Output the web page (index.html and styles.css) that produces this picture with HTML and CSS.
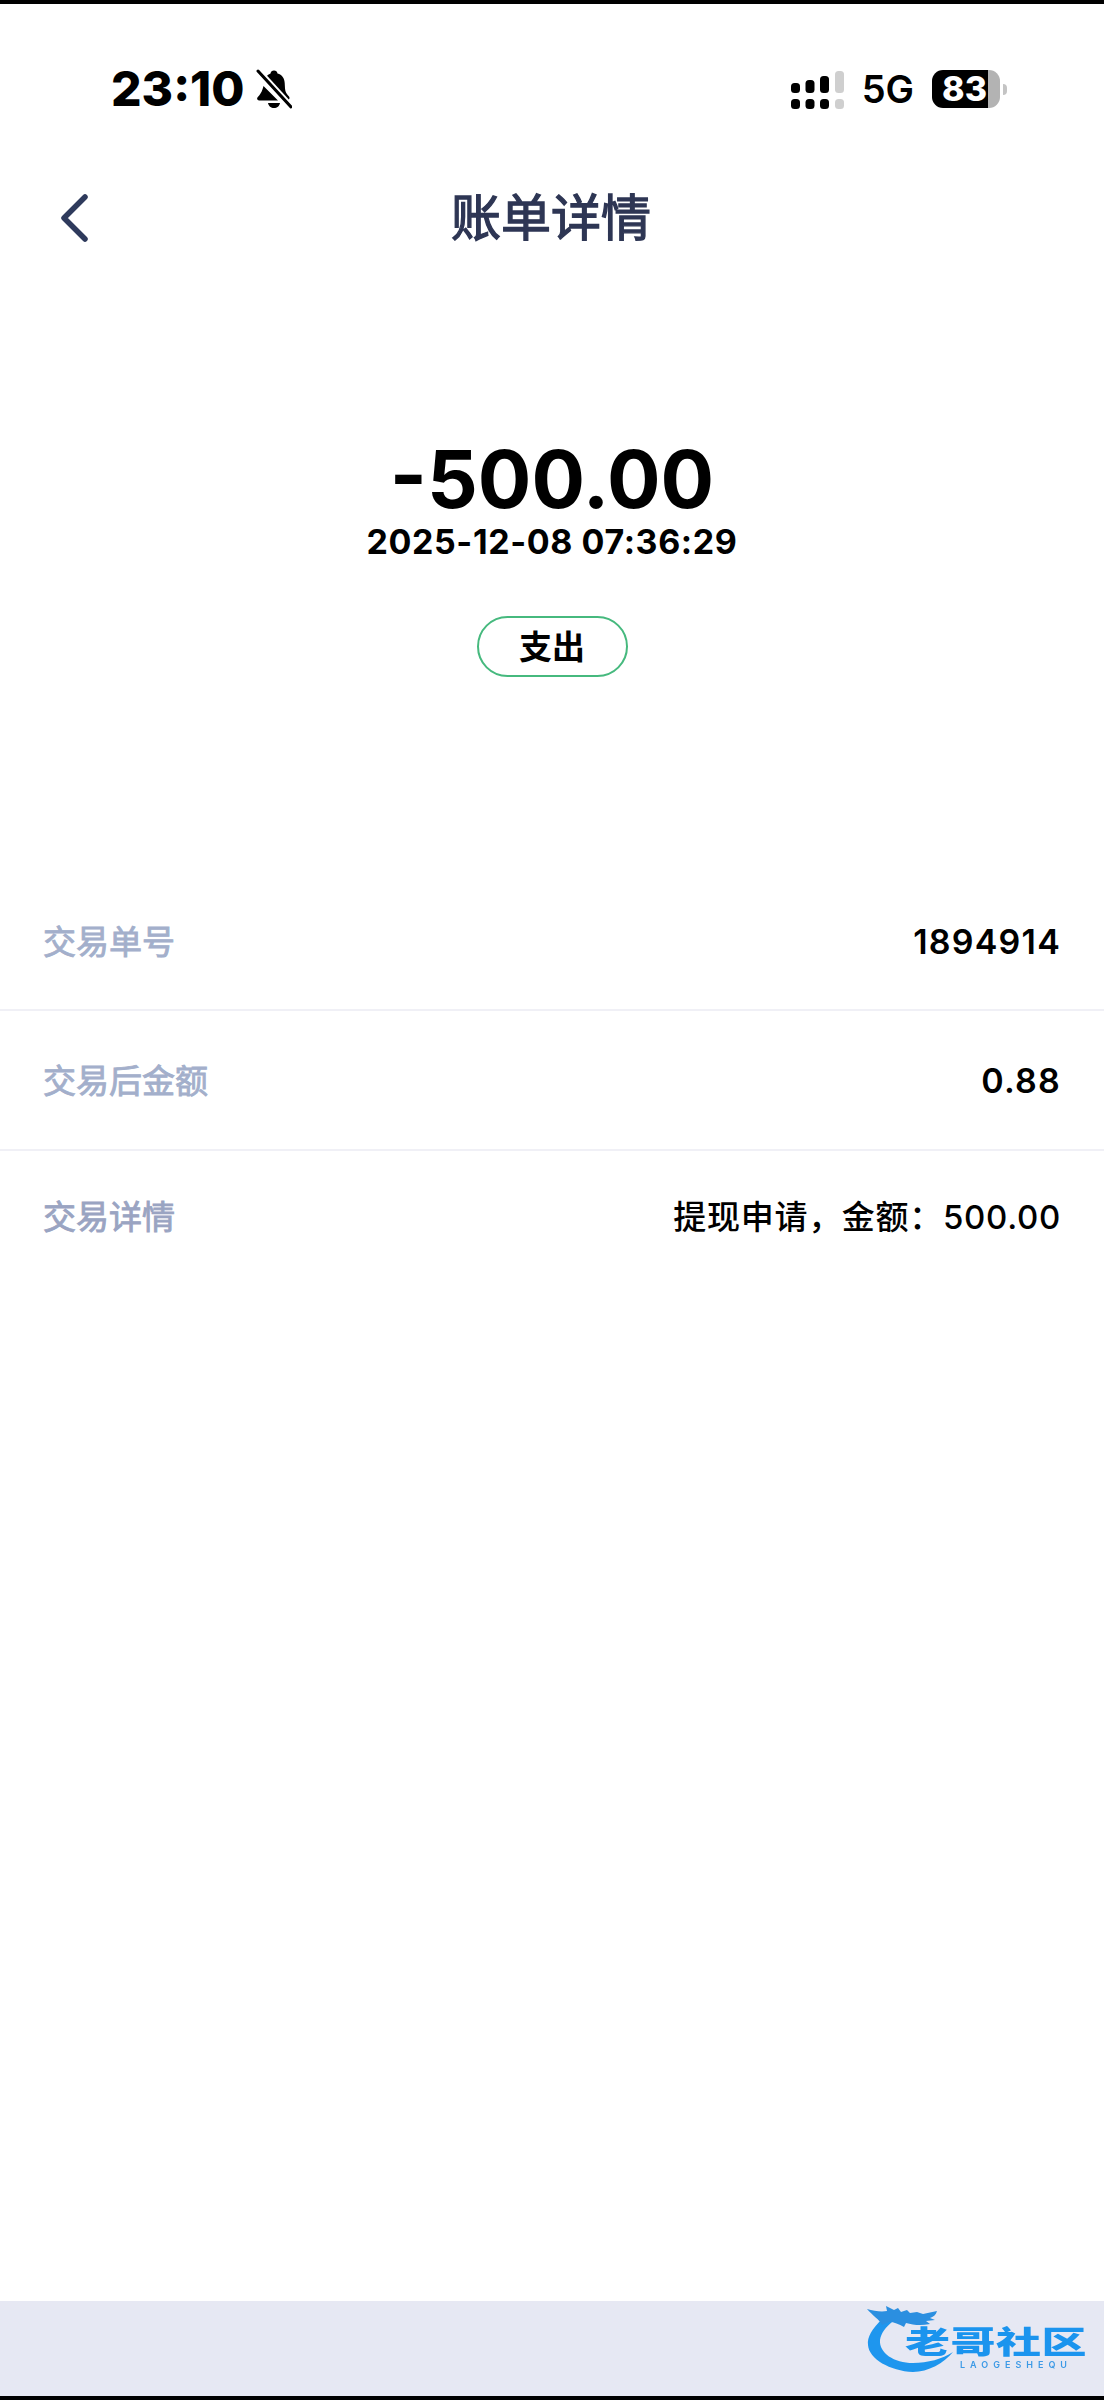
FILE: index.html
```html
<!DOCTYPE html>
<html lang="zh-CN">
<head>
<meta charset="utf-8">
<title>账单详情</title>
<link rel="stylesheet" href="styles.css">
</head>
<body>
<div class="page">
  <header class="status">
    <div class="status-left">
      <span class="time">23:10</span>
      <svg class="bell" viewBox="0 0 36 40" aria-hidden="true">
        <path d="M18 1.500c2 0 3.200 1.300 3.500 3 4.600 1.200 7 5 7.200 9.500l.3 5.500c.2 3.500 1.800 5.600 4 8 1 1.200.6 3-1 3.500H26L8 12.500C9 8.500 11 5.700 14.500 4.500 14.800 2.800 16 1.500 18 1.500Z"/>
        <path d="M7.500 17 22 31.500H3c-1.800 0-2.500-2-1.400-3.200 2.600-2.700 4.500-5.500 5.900-11.300Z"/>
        <path d="M12 34h12c-.5 3-3 5-6 5s-5.500-2-6-5Z"/>
        <path class="bell-gap" d="M2 2l33 36"/>
        <path class="bell-slash" d="M2 2l33 36"/>
      </svg>
    </div>
    <div class="status-right">
      <svg class="signal" viewBox="0 0 53 38" aria-hidden="true">
        <rect x="0" y="12" width="9" height="10" rx="3.500"/>
        <rect x="0" y="28" width="9" height="10" rx="3.500"/>
        <rect x="14.500" y="9" width="9" height="13" rx="3.500"/>
        <rect x="14.500" y="28" width="9" height="10" rx="3.500"/>
        <rect x="29" y="5" width="9" height="17" rx="3.500"/>
        <rect x="29" y="28" width="9" height="10" rx="3.500"/>
        <rect class="signal-off" x="44" y="0" width="9" height="22" rx="3.500"/>
        <rect class="signal-off" x="44" y="28" width="9" height="10" rx="3.500"/>
      </svg>
      <span class="network">5G</span>
      <div class="battery">
        <span class="battery-level">83</span>
        <span class="battery-rest"></span>
        <span class="battery-nub"></span>
      </div>
    </div>
  </header>

  <nav class="nav">
    <svg class="back" viewBox="0 0 28 48" aria-hidden="true">
      <path d="M25 3 4 24l21 21"/>
    </svg>
    <h1 class="title">账单详情</h1>
  </nav>

  <section class="hero">
    <div class="amount">-500.00</div>
    <div class="date">2025-12-08 07:36:29</div>
    <div class="chip">支出</div>
  </section>

  <section class="details">
    <div class="row row-bordered">
      <span class="label">交易单号</span>
      <span class="value">1894914</span>
    </div>
    <div class="row row-bordered">
      <span class="label">交易后金额</span>
      <span class="value">0.88</span>
    </div>
    <div class="row row-last">
      <span class="label label-dim">交易详情</span>
      <span class="value value-text">提现申请，金额：500.00</span>
    </div>
  </section>

  <footer class="band">
    <div class="logo">
      <svg class="dragon" viewBox="0 0 90 72" aria-hidden="true">
        <path class="dragon-body" d="M16 16C6 26 1 34 2 42c1 14 22 26 45 27 15 0 31-9 40-20-11 7-25 11-40 11C28 60 13 50 14 37c1-7 6-13 12-18Z"/>
        <path class="dragon-head" d="M1 6c7 2 14 3 20 2l-1-5 8 4 4-2 3 4 6-2 3 3 7-1 6 2 14-3c-1 4-4 6-7 7l5 2-9 1 4 3c-9 2-17 1-24-1l-2 4c-5-3-10-5-15-5l-7 3C14 17 6 12 1 6Z"/>
      </svg>
      <div class="logo-text">
        <span class="logo-cn">老哥社区</span>
        <span class="logo-en">LAOGESHEQU</span>
      </div>
    </div>
  </footer>
</div>
</body>
</html>
```

FILE: styles.css
```css
* {
  box-sizing: border-box;
}

html,
body {
  margin: 0;
  padding: 0;
  background: #fff;
}

body {
  font-family: Inter, "Noto Sans CJK SC", "Liberation Sans", sans-serif;
  color: #000;
}

.page {
  display: flex;
  flex-direction: column;
  width: 1104px;
  height: 2400px;
  border-top: 4px solid #000;
  border-bottom: 4px solid #000;
  background: #fff;
}

/* status bar */
.status {
  display: flex;
  justify-content: space-between;
  align-items: center;
  height: 170px;
  padding: 0 97px 0 111px;
  flex: none;
}

.status-left {
  display: flex;
  align-items: center;
  gap: 12px;
}

.time {
  font-size: 48px;
  font-weight: 800;
  line-height: 56px;
}

.bell {
  width: 36px;
  height: 40px;
  fill: #000;
}

.bell-gap {
  fill: none;
  stroke: #fff;
  stroke-width: 7;
}

.bell-slash {
  fill: none;
  stroke: #000;
  stroke-width: 3;
  stroke-linecap: round;
}

.status-right {
  display: flex;
  align-items: center;
}

.signal {
  width: 53px;
  height: 38px;
  margin-top: 1px;
  fill: #000;
}

.signal-off {
  fill: #cfcfcf;
}

.network {
  margin-left: 18px;
  font-size: 38px;
  font-weight: 600;
  line-height: 44px;
}

.battery {
  display: flex;
  align-items: center;
  margin-left: 18px;
}

.battery-level {
  display: flex;
  justify-content: flex-end;
  align-items: center;
  width: 56px;
  height: 38px;
  padding-right: 1px;
  border-radius: 11px 0 0 11px;
  background: #000;
  color: #fff;
  font-size: 34px;
  font-weight: 800;
  line-height: 38px;
}

.battery-rest {
  width: 12px;
  height: 38px;
  border-radius: 0 11px 11px 0;
  background: #b3b3b3;
}

.battery-nub {
  width: 4px;
  height: 11px;
  margin-left: 3px;
  border-radius: 0 5px 5px 0;
  background: #c4c4c4;
}

/* navigation */
.nav {
  position: relative;
  display: flex;
  justify-content: center;
  align-items: center;
  height: 88px;
  padding-right: 2px;
  flex: none;
}

.back {
  position: absolute;
  left: 60px;
  top: 20px;
  width: 28px;
  height: 48px;
  fill: none;
  stroke: #2e3a5c;
  stroke-width: 5.500;
  stroke-linecap: round;
  stroke-linejoin: round;
}

.title {
  margin: 0;
  font-size: 50px;
  font-weight: 400;
  line-height: 64px;
  color: #2e3654;
  -webkit-text-stroke: 1.300px #2e3654;
}

/* amount */
.hero {
  display: flex;
  flex-direction: column;
  align-items: center;
  padding-top: 170px;
  height: 610px;
  flex: none;
}

.amount {
  font-size: 79.500px;
  font-weight: 700;
  line-height: 94px;
}

.date {
  font-size: 34px;
  font-weight: 700;
  line-height: 32px;
  letter-spacing: 0.600px;
}

.chip {
  display: flex;
  justify-content: center;
  align-items: center;
  width: 151px;
  height: 61px;
  margin-top: 58px;
  border: 2px solid #46b97e;
  border-radius: 31px;
  font-size: 33px;
  font-weight: 700;
  line-height: 40px;
}

/* detail rows */
.details {
  flex: 1;
}

.row {
  display: flex;
  justify-content: space-between;
  align-items: center;
  padding: 2px 43px 0 43px;
}

.row-bordered {
  height: 140px;
  border-bottom: 2px solid #f0f0f6;
}

.row-bordered:first-child {
  height: 139px;
}

.row-last {
  height: 130px;
}

.label {
  font-size: 33px;
  font-weight: 400;
  line-height: 44px;
  color: #a3afcb;
  -webkit-text-stroke: 0.900px #a3afcb;
}

.label-dim {
  color: #9aa4c2;
  -webkit-text-stroke-color: #9aa4c2;
}

.value {
  font-size: 34px;
  font-weight: 600;
  line-height: 44px;
  letter-spacing: 1.200px;
}

.value-text {
  font-weight: 500;
  font-size: 33px;
  letter-spacing: 0.700px;
}

/* watermark band */
.band {
  display: flex;
  justify-content: flex-end;
  height: 95px;
  padding-right: 17px;
  background: #e6e8f3;
  flex: none;
}

.logo {
  position: relative;
  display: flex;
  width: 221px;
  height: 95px;
}

.dragon {
  position: absolute;
  left: 0;
  top: 2px;
  width: 90px;
  height: 72px;
  filter: blur(0.7px);
}

.dragon-body {
  fill: #1e96ee;
}

.dragon-head {
  fill: #2b8fe0;
}

.logo-text {
  display: flex;
  flex-direction: column;
  align-items: flex-end;
  width: 100%;
  padding-top: 23px;
  filter: blur(0.6px);
}

.logo-cn {
  font-size: 45px;
  font-weight: 900;
  line-height: 36px;
  letter-spacing: 0.500px;
  color: #1b94ee;
  transform: scaleY(0.68);
}

.logo-en {
  margin-right: 15px;
  font-size: 9px;
  font-weight: 600;
  line-height: 9px;
  letter-spacing: 5px;
  color: #3d9ae6;
}
```
